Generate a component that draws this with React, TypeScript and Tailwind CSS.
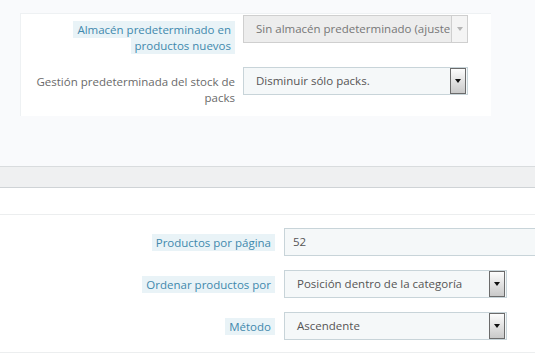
const font = { fontFamily: '"Open Sans", "Noto Sans", sans-serif' };

const Arrow = ({ disabled }: { disabled?: boolean }) =>
  disabled ? (
    <div className="flex h-full w-[16px] items-center justify-center border-l border-[#cfcfcf] bg-[#f4f4f4]">
      <div className="h-0 w-0 border-x-[3px] border-t-[4px] border-x-transparent border-t-[#b5b5b5]" />
    </div>
  ) : (
    <div className="my-[1px] mr-[1px] flex h-[26px] w-[16px] items-center justify-center border border-[#6b6b6b] bg-gradient-to-b from-[#fdfdfd] to-[#c9c9c9]">
      <div className="h-0 w-0 border-x-[3px] border-t-[4px] border-x-transparent border-t-[#111]" />
    </div>
  );

const Select = ({ value, disabled, width }: { value: string; disabled?: boolean; width: string }) => (
  <div
    className={`flex h-[28px] shrink-0 items-center overflow-hidden border ${width} ${
      disabled ? "border-[#cfcfcf] bg-[#ededed] text-[#777]" : "border-[#c8d4d9] bg-[#f5f8f9] text-[#555]"
    }`}
  >
    <span className="flex-1 overflow-hidden whitespace-nowrap pl-[12px] text-[11.5px]">{value}</span>
    <Arrow disabled={disabled} />
  </div>
);

const Label = ({ children, tip, width }: { children: React.ReactNode; tip?: boolean; width: string }) => (
  <div className={`${width} shrink-0 pt-[7px] text-right text-[11.5px] leading-[16px]`}>
    <span
      className={
        tip
          ? "box-decoration-clone bg-[#e9f3f7] px-[4px] py-[1px] text-[#4189ad]"
          : "text-[#6a6a6a]"
      }
    >
      {children}
    </span>
  </div>
);

export default function App() {
  return (
    <div className="h-[362px] w-[535px] overflow-hidden bg-white" style={font}>
      <div className="bg-[#f9fafc] pt-[13px] pb-[50px]">
        <div className="ml-[20px] w-[471px] border-t border-l border-[#eef1f3] bg-white pt-[1px] pb-[10px]">
          <div className="flex gap-[8px]">
            <Label tip width="w-[214px]">
              Almacén predeterminado en
              <br />
              productos nuevos
            </Label>
            <Select disabled width="w-[225px]" value="Sin almacén predeterminado (ajuste por defecto)" />
          </div>
          <div className="mt-[13px] flex gap-[8px]">
            <Label width="w-[214px]">
              Gestión predeterminada del stock de
              <br />
              packs
            </Label>
            <Select width="w-[225px]" value="Disminuir sólo packs." />
          </div>
        </div>
      </div>
      <div className="h-[22px] border-y border-t-[#d9dcde] border-b-[#cfd3d6] bg-[#eff0f1]" />
      <div className="h-[27px] border-b border-[#eceeef]" />
      <div className="flex flex-col gap-[14px] pt-[13px] pb-[12px]">
        <div className="flex gap-[9px]">
          <Label tip width="w-[275px]">Productos por página</Label>
          <div className="flex h-[28px] w-[280px] shrink-0 items-center border border-[#c8d4d9] bg-[#f5f8f9] pl-[8px] text-[11.5px] text-[#555]">
            52
          </div>
        </div>
        <div className="flex gap-[9px]">
          <Label tip width="w-[275px]">Ordenar productos por</Label>
          <Select width="w-[223px]" value="Posición dentro de la categoría" />
        </div>
        <div className="flex gap-[9px]">
          <Label tip width="w-[275px]">Método</Label>
          <Select width="w-[223px]" value="Ascendente" />
        </div>
      </div>
      <div className="border-t border-[#eceeef]" />
    </div>
  );
}
